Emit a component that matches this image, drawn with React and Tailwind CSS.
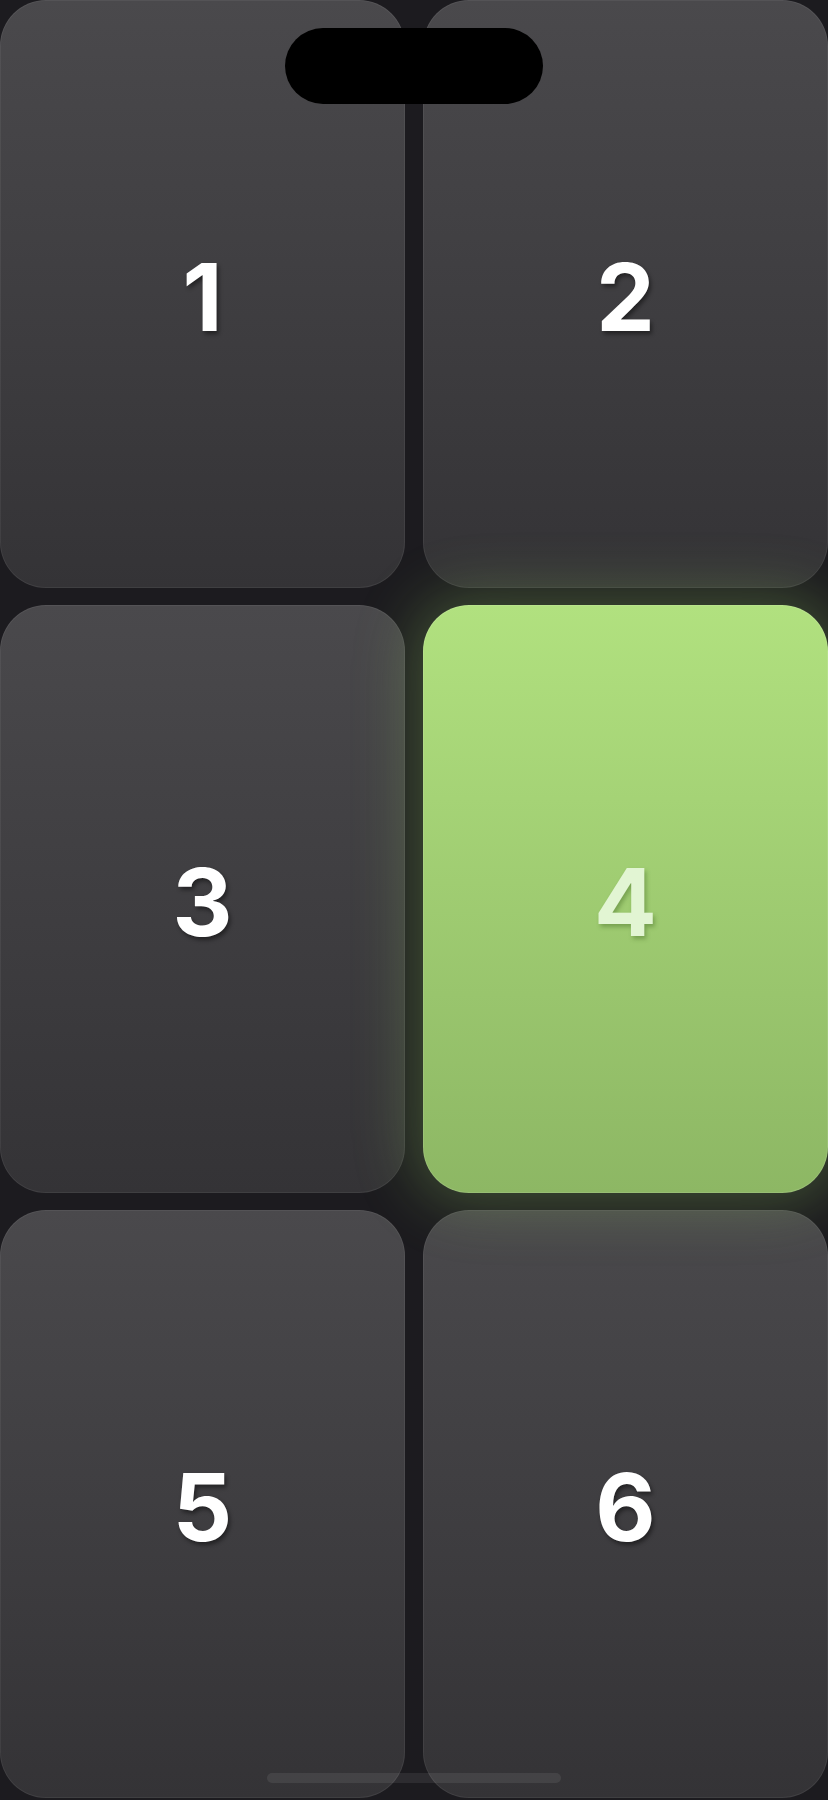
import React from "react";

function Card({ n, active }) {
  if (active) {
    return (
      <div className="relative z-10 flex items-center justify-center rounded-[46px] bg-gradient-to-b from-[#b1e17f] to-[#8db764] shadow-[0_0_60px_10px_rgba(150,205,100,0.3)] ring-1 ring-inset ring-white/10">
        <span className="pt-[7px] text-[93px] font-bold leading-none text-[#e2f5d3] [text-shadow:2px_3px_4px_rgba(70,110,40,0.45)] [font-family:Inter,'Liberation_Sans',sans-serif]">
          {n}
        </span>
      </div>
    );
  }
  return (
    <div className="relative flex items-center justify-center rounded-[46px] bg-gradient-to-b from-[#4a494c] to-[#343336] ring-1 ring-inset ring-white/[0.06]">
      <span className="pt-[7px] text-[93px] font-bold leading-none text-white [text-shadow:2px_3px_4px_rgba(0,0,0,0.45)] [font-family:Inter,'Liberation_Sans',sans-serif]">
        {n}
      </span>
    </div>
  );
}

export default function App() {
  return (
    <div className="relative h-[1800px] w-[828px] overflow-hidden bg-[#1c1b1f]">
      <div className="grid h-[1800px] grid-cols-[405px_405px] grid-rows-[588px_588px_588px] gap-x-[18px] gap-y-[17px]">
        <Card n="1" />
        <Card n="2" />
        <Card n="3" />
        <Card n="4" active />
        <Card n="5" />
        <Card n="6" />
      </div>
      <div className="absolute left-[285px] top-[28px] z-20 h-[76px] w-[258px] rounded-full bg-black" />
      <div className="absolute left-[267px] top-[1773px] z-20 h-[10px] w-[294px] rounded-full bg-white/[0.08]" />
    </div>
  );
}
